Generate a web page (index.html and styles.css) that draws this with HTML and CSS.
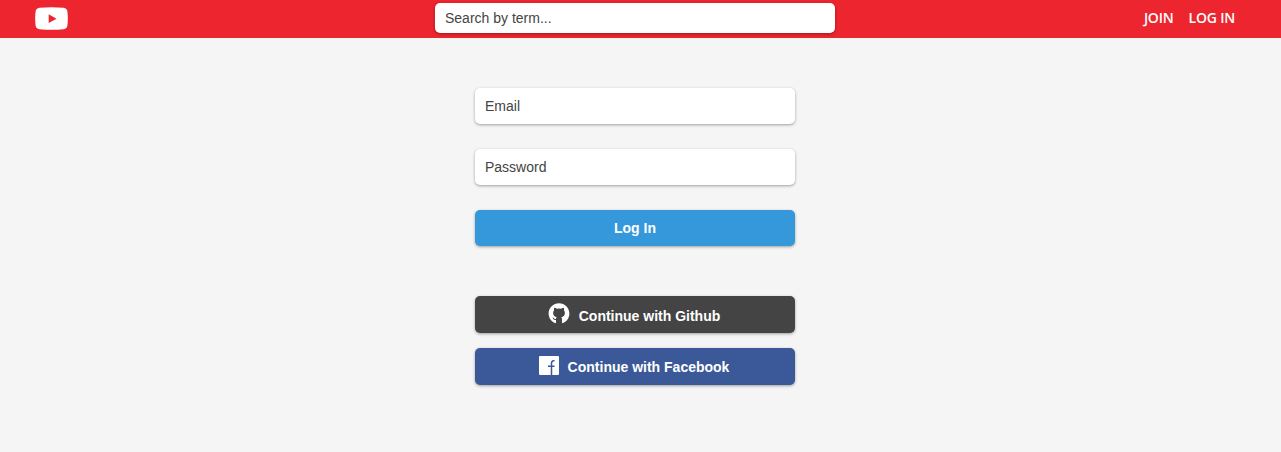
FILE: index.html
```html
<!DOCTYPE html>
<html lang="en">
<head>
<meta charset="utf-8">
<title>Log In</title>
<link rel="stylesheet" href="styles.css">
</head>
<body>
<header class="header">
  <a class="logo" href="#" aria-label="Home">
    <svg width="33" height="23" viewBox="0 0 33 23"><path fill="#fff" d="M4.500.8Q16.500-.4 28.500.8Q32 1.200 32.400 4.500Q33.300 11.500 32.400 18.500Q32 21.800 28.500 22.200Q16.500 23.400 4.500 22.200Q1 21.800.6 18.500Q-.3 11.500.6 4.500Q1 1.200 4.500.8Z"/><path fill="#ec252e" d="M13.700 7.300v8.800l7.800-4.400z"/></svg>
  </a>
  <input class="search" type="text" placeholder="Search by term...">
  <nav class="nav"><a class="nav-link" href="#">JOIN</a><a class="nav-link" href="#">LOG IN</a></nav>
</header>
<main class="main">
  <form class="form">
    <input class="field" type="text" placeholder="Email">
    <input class="field" type="password" placeholder="Password">
    <button class="button login" type="button">Log In</button>
  </form>
  <div class="social">
    <button class="button github" type="button">
      <svg class="github-icon" width="22" height="21" viewBox="0 0 22 21"><path fill="#fff" d="M8 20.300C3.700 19.200.6 15.200.6 10.500C.6 4.700 5.300.2 11 .2S21.400 4.700 21.400 10.500C21.400 15.200 18.300 19.200 14 20.300V16.300Q14 14.900 13.200 14.300Q16.900 13.700 16.900 9.800Q16.900 8.300 15.900 7.200Q16.300 5.900 15.700 4.700Q14.500 4.700 13 5.800Q11 5.300 9 5.800Q7.500 4.700 6.300 4.700Q5.700 5.900 6.100 7.200Q5.100 8.300 5.100 9.800Q5.100 13.700 8.800 14.300Q8.200 14.800 8 15.700Q6.300 16.400 5.300 14.800Q4.900 14.200 4.400 14.300Q4.800 14.800 5.200 15.900Q5.900 17.200 8 17Z"/></svg>
      <span>Continue with Github</span>
    </button>
    <button class="button facebook" type="button">
      <svg class="facebook-icon" width="20" height="19" viewBox="0 0 20 19"><rect width="20" height="19" rx="1" fill="#fff"/><path fill="none" stroke="#3b5998" stroke-width="1.500" d="M12.500 19V7.500Q12.500 4.700 14.500 4.700H15.500M9 10.200H15.500"/></svg>
      <span>Continue with Facebook</span>
    </button>
  </div>
</main>
</body>
</html>
```
FILE: styles.css
```css
* { box-sizing: border-box; }
body {
  margin: 0;
  min-height: 452px;
  background: #f5f5f5;
  font-family: "Liberation Sans", Arial, sans-serif;
}
.header {
  display: grid;
  grid-template-columns: 1fr 400px 1fr;
  height: 38px;
  padding: 3px 46px 0 35px;
  background: #ec252e;
}
.logo { padding-top: 4px; height: 30px; }
.logo svg { display: block; }
.search, .field {
  border: 0;
  border-radius: 5px;
  background: #fff;
  padding: 0 10px;
  color: #444;
  font: 14px "Liberation Sans", Arial, sans-serif;
  box-shadow: 0 1px 3px rgba(0, 0, 0, 0.36);
}
.search { width: 400px; height: 30px; }
.search::placeholder, .field::placeholder { color: #444; opacity: 1; }
.nav {
  display: flex;
  justify-content: flex-end;
  align-items: center;
  gap: 15px;
  height: 28px;
}
.nav-link {
  color: #fff;
  font: 600 14px "Open Sans", sans-serif;
  letter-spacing: -0.2px;
  text-decoration: none;
}
.main { width: 320px; margin: 50px 0 0 475px; }
.form { display: flex; flex-direction: column; gap: 25px; }
.field { width: 320px; height: 36px; }
.button {
  display: flex;
  justify-content: center;
  align-items: center;
  width: 320px;
  height: 37px;
  padding: 0;
  border: 0;
  border-radius: 5px;
  color: #fff;
  font: bold 14px "Liberation Sans", Arial, sans-serif;
  box-shadow: 0 1px 3px rgba(0, 0, 0, 0.36);
}
.login { height: 36px; background: #3498db; }
.social { display: flex; flex-direction: column; gap: 15px; margin-top: 50px; }
.github { gap: 9px; padding-right: 2px; background: #444; }
.github span { padding-top: 3px; }
.github-icon { margin-bottom: 3px; }
.facebook { gap: 9px; padding-right: 2px; background: #3b5998; }
.facebook span { padding-top: 1px; }
.facebook-icon { margin-bottom: 2px; }
```
